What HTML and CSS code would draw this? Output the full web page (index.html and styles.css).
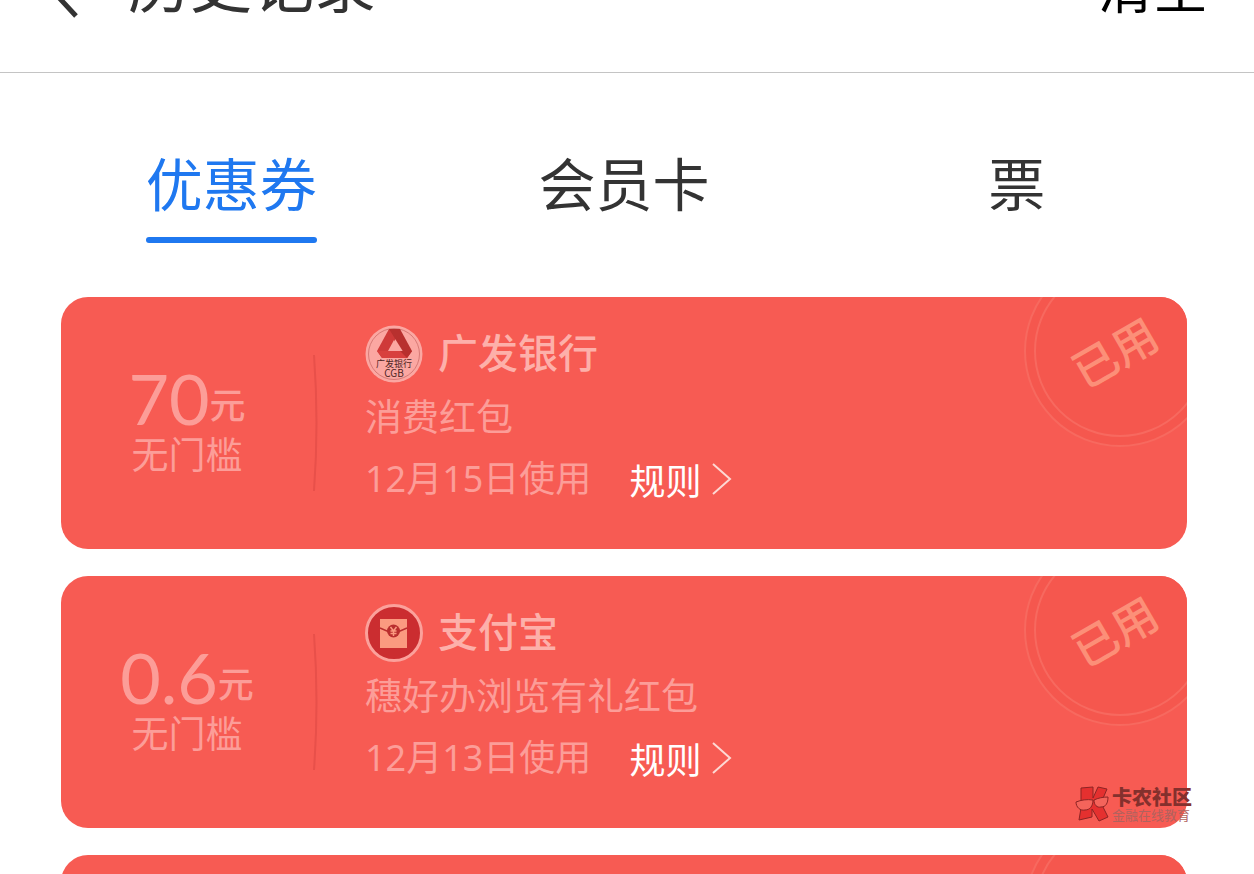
FILE: index.html
```html
<!DOCTYPE html>
<html lang="zh-CN">
<head>
<meta charset="utf-8">
<meta name="viewport" content="width=device-width, initial-scale=1">
<title>历史记录</title>
<link rel="stylesheet" href="styles.css">
</head>
<body>
<header class="topbar">
  <button class="back" type="button" aria-label="返回">
    <svg width="32" height="56" viewBox="0 0 32 56" fill="none" stroke="#333" stroke-width="5"><path d="M29 1 3 27 28 54"/></svg>
  </button>
  <h1 class="title">历史记录</h1>
  <button class="clear" type="button">清空</button>
</header>
<nav class="tabs">
  <a class="tab active" href="#coupons">优惠券</a>
  <a class="tab" href="#cards">会员卡</a>
  <a class="tab" href="#tickets">票</a>
</nav>
<main class="coupons" id="coupons">
  <article class="coupon">
    <div class="value">
      <p class="price"><span class="amount">70</span><span class="unit">元</span></p>
      <p class="condition">无门槛</p>
    </div>
    <svg class="divider" width="6" height="136" viewBox="0 0 6 136" fill="none" stroke="#e8504a" stroke-width="2"><path d="M1 0Q6 68 1 136"/></svg>
    <div class="details">
      <div class="brand">
        <svg class="logo" viewBox="0 0 58 58">
          <circle cx="29" cy="29" r="28.500" fill="#fba7a2"/>
          <circle cx="29" cy="29" r="25.500" fill="none" stroke="#d87a76" stroke-width="1"/>
          <path d="M24 4h11L22 33h-5l-5-7z" fill="#cf3a39"/>
          <path d="M24 4h11l12 22-5 7z" fill="#b8302e"/>
          <path d="M12 26h35l-5 7H17z" fill="#d8403e"/>
          <path d="M35 26h12l-5 7z" fill="#b8302e"/>
          <path d="M29 15l6 11H23z" fill="#fba7a2"/>
          <text class="logo-cn" x="29" y="42" text-anchor="middle">广发银行</text>
          <text class="logo-en" x="29" y="52" text-anchor="middle">CGB</text>
        </svg>
        <h2 class="name">广发银行</h2>
      </div>
      <p class="kind">消费红包</p>
      <div class="usage">
        <span class="date">12月15日使用</span>
        <a class="rules" href="#rules">规则<svg class="chevron" width="20" height="32" viewBox="0 0 20 32" fill="none" stroke="#fdd8d3" stroke-width="2"><path d="M1 1l17 15L1 31"/></svg></a>
      </div>
    </div>
    <div class="stamp"><span class="stamp-text">已用</span></div>
  </article>
  <article class="coupon">
    <div class="value">
      <p class="price"><span class="amount">0.6</span><span class="unit">元</span></p>
      <p class="condition">无门槛</p>
    </div>
    <svg class="divider" width="6" height="136" viewBox="0 0 6 136" fill="none" stroke="#e8504a" stroke-width="2"><path d="M1 0Q6 68 1 136"/></svg>
    <div class="details">
      <div class="brand">
        <svg class="logo" viewBox="0 0 58 58">
          <circle cx="29" cy="29" r="27.500" fill="#cb2d30" stroke="#fba19b" stroke-width="3"/>
          <path d="M15 15h27v29H15z" fill="#fb9a80"/>
          <path d="M15 24l8 3.500h11l8-3.500" fill="none" stroke="#b92e2e" stroke-width="1.500"/>
          <circle cx="28.500" cy="27" r="6.500" fill="#b92e2e"/>
          <path d="M25.500 23l3 4 3-4M28.500 27v5M25.500 27h6M25.500 29.500h6" fill="none" stroke="#fb9a80" stroke-width="1.500"/>
        </svg>
        <h2 class="name">支付宝</h2>
      </div>
      <p class="kind">穗好办浏览有礼红包</p>
      <div class="usage">
        <span class="date">12月13日使用</span>
        <a class="rules" href="#rules">规则<svg class="chevron" width="20" height="32" viewBox="0 0 20 32" fill="none" stroke="#fdd8d3" stroke-width="2"><path d="M1 1l17 15L1 31"/></svg></a>
      </div>
    </div>
    <div class="stamp"><span class="stamp-text">已用</span></div>
  </article>
  <article class="coupon">
    <div class="stamp"></div>
  </article>
</main>
<aside class="watermark">
  <svg width="36" height="36" viewBox="0 0 36 36" stroke="#8c2424" stroke-width="1">
    <path d="M7 2l12-1v11l5-11 9 2-6 14 7 14-9 4-7-12v8l-13 3 2-12z" fill="#e5302f"/>
    <path d="M2 16c5-2 11-3 17-2 0 6-3 10-8 10-5 1-9-3-9-8zM20 14c4-2 9-3 14-3 0 6-2 10-7 10-4 1-7-2-7-7z" fill="#f4645b"/>
  </svg>
  <div class="watermark-copy">
    <strong class="watermark-name">卡农社区</strong>
    <span class="watermark-tag">金融在线教育</span>
  </div>
</aside>
</body>
</html>
```

FILE: styles.css
```css
* {
  box-sizing: border-box;
}

html,
body {
  height: 100%;
}

body {
  margin: 0;
  overflow: hidden;
  background: #fff;
  color: #333;
  font-family: "Noto Sans CJK SC", sans-serif;
}

h1,
h2,
p {
  margin: 0;
  font-weight: 400;
}

button {
  padding: 0;
  border: 0;
  background: none;
  font: inherit;
}

a {
  color: inherit;
  text-decoration: none;
}

svg {
  display: block;
}

.topbar {
  display: flex;
  align-items: flex-end;
  height: 73px;
  padding: 0 46px 54px 48px;
  border-bottom: 1px solid #c4c4c4;
}

.title {
  margin-left: 48px;
  font-size: 62px;
  line-height: 74px;
}

.clear {
  margin-left: auto;
  color: #000;
  font-size: 55px;
  line-height: 68px;
}

.tabs {
  display: grid;
  grid-template-columns: repeat(3, 1fr);
  justify-items: center;
  padding: 73px 41px 0 35px;
}

.tab {
  position: relative;
  padding-bottom: 27px;
  font-size: 57px;
  line-height: 70px;
}

.active {
  color: #1f78f0;
}

.active::after {
  content: "";
  position: absolute;
  right: 0;
  bottom: 0;
  left: 0;
  height: 6px;
  border-radius: 3px;
  background: #1f78f0;
}

.coupons {
  display: grid;
  gap: 27px;
  padding: 54px 67px 0 61px;
}

.coupon {
  display: flex;
  position: relative;
  min-height: 252px;
  overflow: hidden;
  border-radius: 27px;
  background: #f75b53;
  color: #fc9d98;
}

.value {
  flex: 0 0 252px;
  padding-top: 66px;
}

.price {
  display: flex;
  align-items: flex-end;
  justify-content: center;
}

.amount {
  font-family: Lato, sans-serif;
  font-size: 70px;
  line-height: 70px;
}

.unit {
  font-size: 36px;
  font-weight: 500;
  line-height: 60px;
}

.condition {
  font-size: 37px;
  line-height: 40px;
  text-align: center;
}

.divider {
  margin-top: 58px;
}

.details {
  padding: 28px 0 0 46px;
}

.brand {
  display: flex;
  gap: 15px;
}

.logo {
  width: 58px;
  height: 58px;
}

.logo-cn {
  fill: #4d2423;
  font-size: 9px;
}

.logo-en {
  fill: #4d2423;
  font-size: 10px;
}

.name {
  color: #fdb0aa;
  font-size: 40px;
  font-weight: 500;
  line-height: 52px;
}

.kind {
  margin-top: 6px;
  font-size: 37px;
  line-height: 52px;
}

.usage {
  display: flex;
  gap: 38px;
  margin-top: 12px;
  font-size: 36px;
  line-height: 52px;
}

.date {
  font-family: "Noto Sans", "Noto Sans CJK SC", sans-serif;
}

.rules {
  display: flex;
  align-items: center;
  gap: 11px;
  color: #fff;
}

.stamp {
  display: grid;
  position: absolute;
  top: -42px;
  right: -29px;
  width: 192px;
  height: 192px;
  padding: 0 12px 0 0;
  place-items: center;
  border: 2px solid #f7695f;
  border-radius: 50%;
  background: #f5574e;
}

.stamp::before {
  content: "";
  position: absolute;
  inset: 8px;
  border: 2px solid #f7695f;
  border-radius: 50%;
}

.stamp-text {
  color: #fc8f78;
  font-size: 45px;
  font-weight: 500;
  line-height: 50px;
  transform: rotate(-30deg);
}

.watermark {
  display: flex;
  position: absolute;
  top: 786px;
  right: 62px;
  align-items: center;
  gap: 2px;
}

.watermark-copy {
  display: grid;
}

.watermark-name {
  color: #84302d;
  font-size: 20px;
  font-weight: 900;
  line-height: 22px;
}

.watermark-tag {
  color: #b0625e;
  font-size: 13px;
  line-height: 14px;
}
```
